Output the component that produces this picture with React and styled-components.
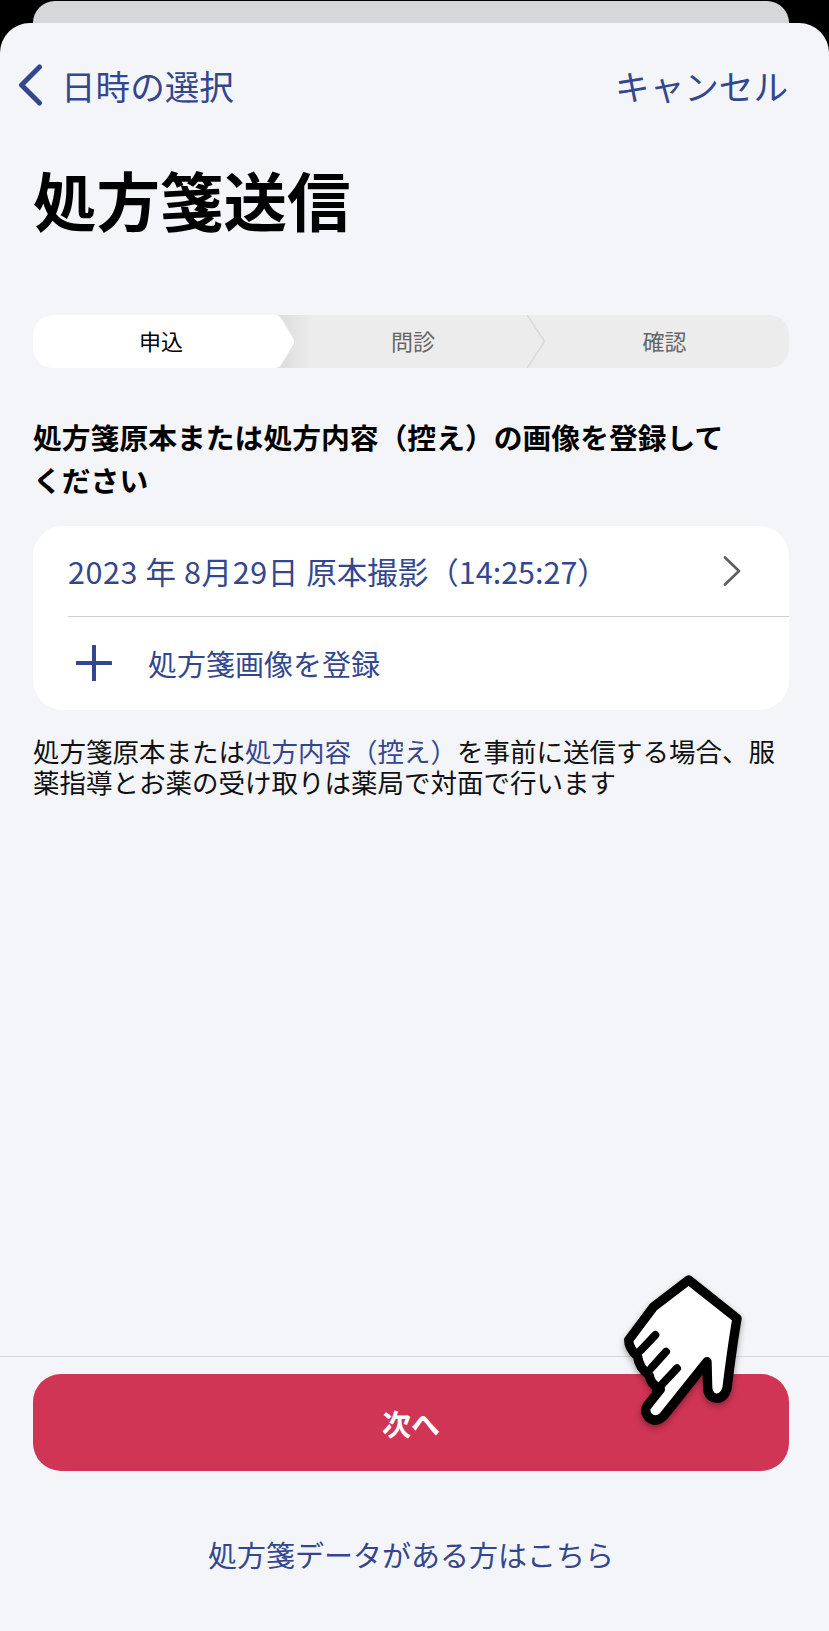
import React from 'react';
import styled, { createGlobalStyle } from 'styled-components';

const GlobalStyle = createGlobalStyle`
  html, body {
    margin: 0;
    padding: 0;
    background: #000;
  }
  body {
    font-family: "Noto Sans CJK JP", "Noto Sans", sans-serif;
  }
  * {
    box-sizing: border-box;
  }
`;

const BLUE = '#33478f';

const Screen = styled.div`
  position: relative;
  width: 829px;
  height: 1631px;
  display: flex;
  flex-direction: column;
  overflow: hidden;
  background: #000;
`;

const BackSheet = styled.div`
  height: 22px;
  margin: 1px 40px 0 33px;
  flex: none;
  background: #d6d7d9;
  border-radius: 22px 22px 0 0;
`;

const Sheet = styled.div`
  flex: 1;
  display: flex;
  flex-direction: column;
  background: #f4f5f8;
  border-radius: 30px 30px 0 0;
`;

const Nav = styled.div`
  display: flex;
  align-items: center;
  justify-content: space-between;
  height: 62px;
  margin-top: 31px;
  padding: 0 41px 0 18px;
  color: ${BLUE};
  font-size: 34.6px;
  line-height: 62px;
`;

const NavBack = styled.div`
  display: flex;
  align-items: center;
  gap: 18px;
`;

const Title = styled.h1`
  margin: 43px 0 0 33px;
  font-size: 63.5px;
  line-height: 78px;
  font-weight: 700;
  color: #000;
`;

const Stepper = styled.div`
  display: grid;
  grid-template-columns: 243px 251px 262px;
  height: 53px;
  margin: 78px 40px 0 33px;
  background: #ececec;
  border-radius: 20px;
`;

const Step = styled.div`
  position: relative;
  display: flex;
  align-items: center;
  justify-content: center;
  padding-left: ${(p) => p.$shift}px;
  padding-bottom: 4px;
  font-size: 22px;
  color: #666;
`;

const ActiveStep = styled(Step)`
  z-index: 1;
  color: #000;
  background: #fff;
  border-radius: 20px 0 0 20px;
`;

const ShadedStep = styled(Step)`
  background: linear-gradient(90deg, #dcdcdc, #ececec 38px);
`;

const StepShape = styled.svg`
  position: absolute;
  top: 0;
  left: ${(p) => p.$left};
  width: 20px;
  height: 53px;
`;

const Question = styled.h2`
  margin: 47px 96px 0 33px;
  font-size: 28.8px;
  line-height: 43px;
  font-weight: 700;
  color: #000;
`;

const Card = styled.div`
  margin: 25px 40px 0 33px;
  padding-left: 35px;
  height: 184px;
  background: #fff;
  border-radius: 30px;
`;

const CardRow = styled.div`
  display: flex;
  align-items: center;
  justify-content: space-between;
  height: ${(p) => p.$h}px;
  padding-right: 48px;
  font-size: ${(p) => p.$size}px;
  color: ${BLUE};
  border-bottom: ${(p) => (p.$divided ? '1px solid #cfcfd3' : 'none')};
`;

const PhotoDate = styled.span`
  letter-spacing: 0.6px;
`;

const AddLabel = styled.div`
  display: flex;
  align-items: center;
  gap: 36px;
  margin-left: 8px;
`;

const Note = styled.p`
  margin: 25px 40px 0 33px;
  font-size: 26.5px;
  line-height: 31px;
  color: #111;
`;

const NoteLink = styled.span`
  color: ${BLUE};
`;

const Spacer = styled.div`
  flex: 1;
`;

const Footer = styled.div`
  display: flex;
  flex-direction: column;
  align-items: center;
  height: 275px;
  padding: 17px 7px 0 0;
  border-top: 1px solid #d6d7da;
`;

const NextButton = styled.button`
  width: 756px;
  height: 97px;
  border: none;
  border-radius: 28px;
  background: #d13555;
  color: #fff;
  font-family: inherit;
  font-size: 29px;
  font-weight: 700;
`;

const DataLink = styled.div`
  margin-top: 61px;
  font-size: 29px;
  line-height: 44px;
  color: ${BLUE};
`;

const Hand = styled.svg`
  position: absolute;
  left: 599px;
  top: 1260px;
  width: 229px;
  height: 200px;
  filter: drop-shadow(0 3px 3px rgba(0, 0, 0, 0.35));
`;

export default function App() {
  return (
    <Screen>
      <GlobalStyle />
      <BackSheet />
      <Sheet>
        <Nav>
          <NavBack>
            <svg width="25" height="42" viewBox="0 0 25 42">
              <path d="M21.500 3 L3.500 21 L21.500 39" fill="none" stroke={BLUE} strokeWidth="5" strokeLinecap="round" strokeLinejoin="round" />
            </svg>
            <span>日時の選択</span>
          </NavBack>
          <span>キャンセル</span>
        </Nav>
        <Title>処方箋送信</Title>
        <Stepper>
          <ActiveStep $shift={13}>
            申込
            <StepShape $left="100%" viewBox="0 0 20 53">
              <path d="M0 0 Q3 0 5 3 L17 23 Q19 26.500 17 30 L5 50 Q3 53 0 53 Z" fill="#fff" />
            </StepShape>
          </ActiveStep>
          <ShadedStep $shift={23}>問診</ShadedStep>
          <Step $shift={13}>
            <StepShape $left="0" viewBox="0 0 20 53">
              <path d="M0 0 L16 24 Q18 26.500 16 29 L0 53" fill="none" stroke="#d9d9d9" strokeWidth="1.500" />
            </StepShape>
            確認
          </Step>
        </Stepper>
        <Question>処方箋原本または処方内容（控え）の画像を登録してください</Question>
        <Card>
          <CardRow $h={91} $size={30.5} $divided>
            <span>
              <PhotoDate>2023 年 8月29日 </PhotoDate>原本撮影（14:25:27）
            </span>
            <svg width="18" height="30" viewBox="0 0 18 30">
              <path d="M2 1.500 L16 15 L2 28.500" fill="none" stroke="#5f5f5f" strokeWidth="2.600" strokeLinecap="round" strokeLinejoin="round" />
            </svg>
          </CardRow>
          <CardRow $h={92} $size={29}>
            <AddLabel>
              <svg width="36" height="36" viewBox="0 0 36 36">
                <path d="M18 1 V35 M1 18 H35" fill="none" stroke={BLUE} strokeWidth="4" strokeLinecap="round" />
              </svg>
              <span>処方箋画像を登録</span>
            </AddLabel>
          </CardRow>
        </Card>
        <Note>
          処方箋原本または<NoteLink>処方内容（控え）</NoteLink>を事前に送信する場合、服薬指導とお薬の受け取りは薬局で対面で行います
        </Note>
        <Spacer />
        <Footer>
          <NextButton>次へ</NextButton>
          <DataLink>処方箋データがある方はこちら</DataLink>
        </Footer>
      </Sheet>
      <Hand viewBox="0 0 675 600">
        <path
          d="M263 60 L408 175 Q395 250 378 385 Q368 418 342 414 Q320 408 320 380 L318 305 L188 468 Q165 490 143 472 Q128 455 138 438 L178 388 Q148 372 145 347 Q113 322 110 290 Q83 265 83 240 L158 140 Z"
          fill="#fff"
          stroke="#000"
          strokeWidth="28"
          strokeLinejoin="round"
        />
        <path
          d="M163 225 L118 272 M195 275 L150 325 M228 325 L165 392"
          fill="none"
          stroke="#000"
          strokeWidth="24"
          strokeLinecap="round"
        />
      </Hand>
    </Screen>
  );
}
